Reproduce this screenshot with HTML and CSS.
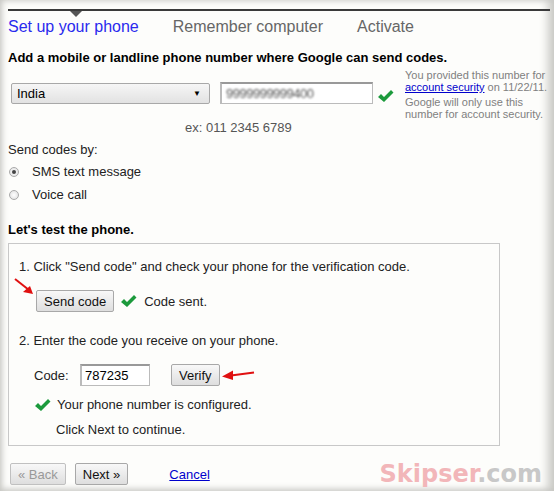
FILE: index.html
```html
<!DOCTYPE html>
<html lang="en">
  <head>
    <meta charset="UTF-8">
    <title>2-step verification</title>
    <link rel="stylesheet" href="styles.css">
  </head>
  <body>
    <div class="frame">
      <ul class="steps">
        <li class="active">Set up your phone</li>
        <li>Remember computer</li>
        <li>Activate</li>
      </ul>
      <h3 class="lead">Add a mobile or landline phone number where Google can send codes.</h3>
      <div class="phone-row">
        <div class="phone-fields">
          <div class="select"><span>India</span><span class="caret">&#9660;</span></div>
          <div class="field phone"><span class="blurred">9999999999400</span></div>
          <svg class="check" width="17" height="14" viewBox="0 0 17 14"><path d="M1 8 L4 5 L7 8 L14 1 L16.5 3.5 L7 13 Z" fill="#1c9a3c"/></svg>
          <div class="example">ex: 011 2345 6789</div>
        </div>
        <div class="note">
          <p>You provided this number for <a href="#">account security</a> on 11/22/11.</p>
          <p>Google will only use this number for account security.</p>
        </div>
      </div>
      <p class="label">Send codes by:</p>
      <label class="radio"><span class="dot on"></span>SMS text message</label>
      <label class="radio"><span class="dot"></span>Voice call</label>
      <h3 class="test-title">Let's test the phone.</h3>
      <div class="test-box">
        <p>1. Click "Send code" and check your phone for the verification code.</p>
        <div class="line send-line">
          <svg class="arrow arrow-send" width="22" height="18" viewBox="0 0 22 18"><path d="M1 1 L15 12" stroke="#e01010" stroke-width="2"/><path d="M19 16 L9 14 L16 8 Z" fill="#e01010"/></svg>
          <button class="btn">Send code</button>
          <svg class="check" width="17" height="14" viewBox="0 0 17 14"><path d="M1 8 L4 5 L7 8 L14 1 L16.5 3.5 L7 13 Z" fill="#1c9a3c"/></svg>
          <span>Code sent.</span>
        </div>
        <p class="step2">2. Enter the code you receive on your phone.</p>
        <div class="line code-line">
          <span class="code-label">Code:</span>
          <div class="field code">787235</div>
          <button class="btn verify">Verify</button>
          <svg class="arrow arrow-verify" width="34" height="12" viewBox="0 0 34 12"><path d="M10 6.5 L33 3.5" stroke="#e01010" stroke-width="2"/><path d="M1 7.5 L12 1.5 L12 11 Z" fill="#e01010"/></svg>
        </div>
        <div class="line done">
          <svg class="check" width="17" height="14" viewBox="0 0 17 14"><path d="M1 8 L4 5 L7 8 L14 1 L16.5 3.5 L7 13 Z" fill="#1c9a3c"/></svg>
          <span>Your phone number is configured.</span>
        </div>
        <p class="next-hint">Click Next to continue.</p>
      </div>
      <div class="actions">
        <button class="btn disabled">&laquo; Back</button>
        <button class="btn">Next &raquo;</button>
        <a href="#" class="cancel">Cancel</a>
        <span class="watermark"><span class="brand">Skipser</span>.com</span>
      </div>
    </div>
  </body>
</html>
```

FILE: styles.css
```css
html, body {
  margin: 0px;
  background-color: #fdfdfb;
}
body {
  font-family: "Liberation Sans", Arial, sans-serif;
  font-size: 13px;
  color: #222;
}
.frame {
  height: 491px;
  box-sizing: border-box;
  padding: 9px 4px 0 8px;
  overflow: hidden;
  box-shadow: inset 6px 0 6px -4px #c8c8c4, inset -14px 0 10px -8px #c8c8c4, inset 0 5px 6px -4px #d0d0cc, inset 0 -6px 6px -4px #c8c8c4;
}
.steps {
  display: flex;
  gap: 34px;
  list-style-type: none;
  margin: 0;
  padding: 7px 0 0 0;
  border-top: 2px solid #3a3a3a;
  font-size: 16px;
  color: #666;
}
.steps li.active {
  color: #2a2aee;
  position: relative;
}
.steps li.active::before {
  content: "";
  position: absolute;
  top: -7px;
  left: 62px;
  border-left: 6px solid transparent;
  border-right: 6px solid transparent;
  border-top: 6px solid #555;
}
.lead {
  margin: 14px 0 0 0;
  font-size: 13px;
  color: #000;
}
.phone-row {
  display: flex;
  gap: 9px;
}
.phone-fields {
  flex: none;
  display: flex;
  flex-wrap: wrap;
  align-items: center;
  align-content: flex-start;
  width: 385px;
  padding: 17px 0 0 3px;
}
.select {
  display: flex;
  justify-content: space-between;
  align-items: center;
  box-sizing: border-box;
  width: 199px;
  height: 21px;
  padding: 0 8px 0 5px;
  border: 1px solid #a8a8a8;
  border-radius: 2px;
  background: linear-gradient(#f6f6f6, #e2e2e2);
  color: #000;
}
.caret {
  font-size: 8px;
}
.field {
  box-sizing: border-box;
  border: 1px solid #bbb;
  border-top-color: #999;
  background-color: #fff;
}
.phone {
  width: 153px;
  height: 22px;
  margin-left: 10px;
  padding: 2px 4px;
  overflow: hidden;
  border-width: 2px 1px 1px 2px;
}
.blurred {
  color: #555;
  letter-spacing: -0.5px;
  filter: blur(0.9px);
}
.check {
  display: block;
}
.phone-fields .check {
  margin: 6px 0 0 4px;
}
.example {
  width: 100%;
  padding: 16px 0 0 174px;
  color: #555;
}
.note {
  width: 146px;
  font-size: 11px;
  color: #808080;
  line-height: 12px;
  padding-top: 4px;
}
.note p {
  margin: 0 0 3px 0;
}
.note a {
  color: #0000cc;
}
.label {
  margin: 7px 0 3px 0;
}
.radio {
  display: flex;
  align-items: center;
  gap: 13px;
  height: 23px;
  padding-left: 1px;
  color: #222;
}
.dot {
  box-sizing: border-box;
  width: 10px;
  height: 10px;
  border-radius: 50%;
  border: 1px solid #aaa;
  background: radial-gradient(#fff, #ddd);
  position: relative;
}
.dot.on::after {
  content: "";
  position: absolute;
  top: 2px;
  left: 2px;
  width: 4px;
  height: 4px;
  border-radius: 50%;
  background-color: #444;
}
.test-title {
  margin: 16px 0 6px 0;
  font-size: 13px;
  color: #000;
}
.test-box {
  width: 492px;
  height: 203px;
  box-sizing: border-box;
  border: 1px solid #c8c8c8;
  padding: 15px 10px 0 10px;
}
.test-box p {
  margin: 0;
}
.line {
  display: flex;
  align-items: center;
  position: relative;
}
.send-line {
  margin: 16px 0 0 17px;
  gap: 6px;
}
.send-line span {
  margin-left: 1px;
}
.btn {
  font-family: "Liberation Sans", Arial, sans-serif;
  font-size: 13px;
  height: 22px;
  padding: 0 7px;
  color: #111;
  border: 1px solid #a8a8a8;
  border-radius: 2px;
  background: linear-gradient(#f8f8f8, #dedede);
}
.arrow {
  position: absolute;
}
.arrow-send {
  left: -22px;
  top: -12px;
}
.arrow-verify {
  left: 187px;
  top: 5px;
}
.step2 {
  margin-top: 21px !important;
}
.code-line {
  margin: 16px 0 0 15px;
}
.code-label {
  width: 46px;
}
.code {
  width: 70px;
  height: 22px;
  padding: 2px 3px;
  color: #000;
  border-width: 2px 1px 1px 2px;
}
.verify {
  margin-left: 21px;
}
.done {
  margin: 11px 0 0 15px;
  gap: 6px;
}
.next-hint {
  margin: 10px 0 0 37px !important;
}
.actions {
  display: flex;
  align-items: center;
  gap: 9px;
  margin: 14px 0 0 2px;
}
.btn.disabled {
  color: #999;
  border-color: #c0c0c0;
}
.cancel {
  margin-left: 32px;
  color: #0000cc;
}
.watermark {
  margin-left: auto;
  margin-right: 8px;
  font-family: "DejaVu Sans", sans-serif;
  font-weight: bold;
  font-size: 24px;
  color: #c8c8c8;
}
.brand {
  color: #f2b6b9;
}
```
